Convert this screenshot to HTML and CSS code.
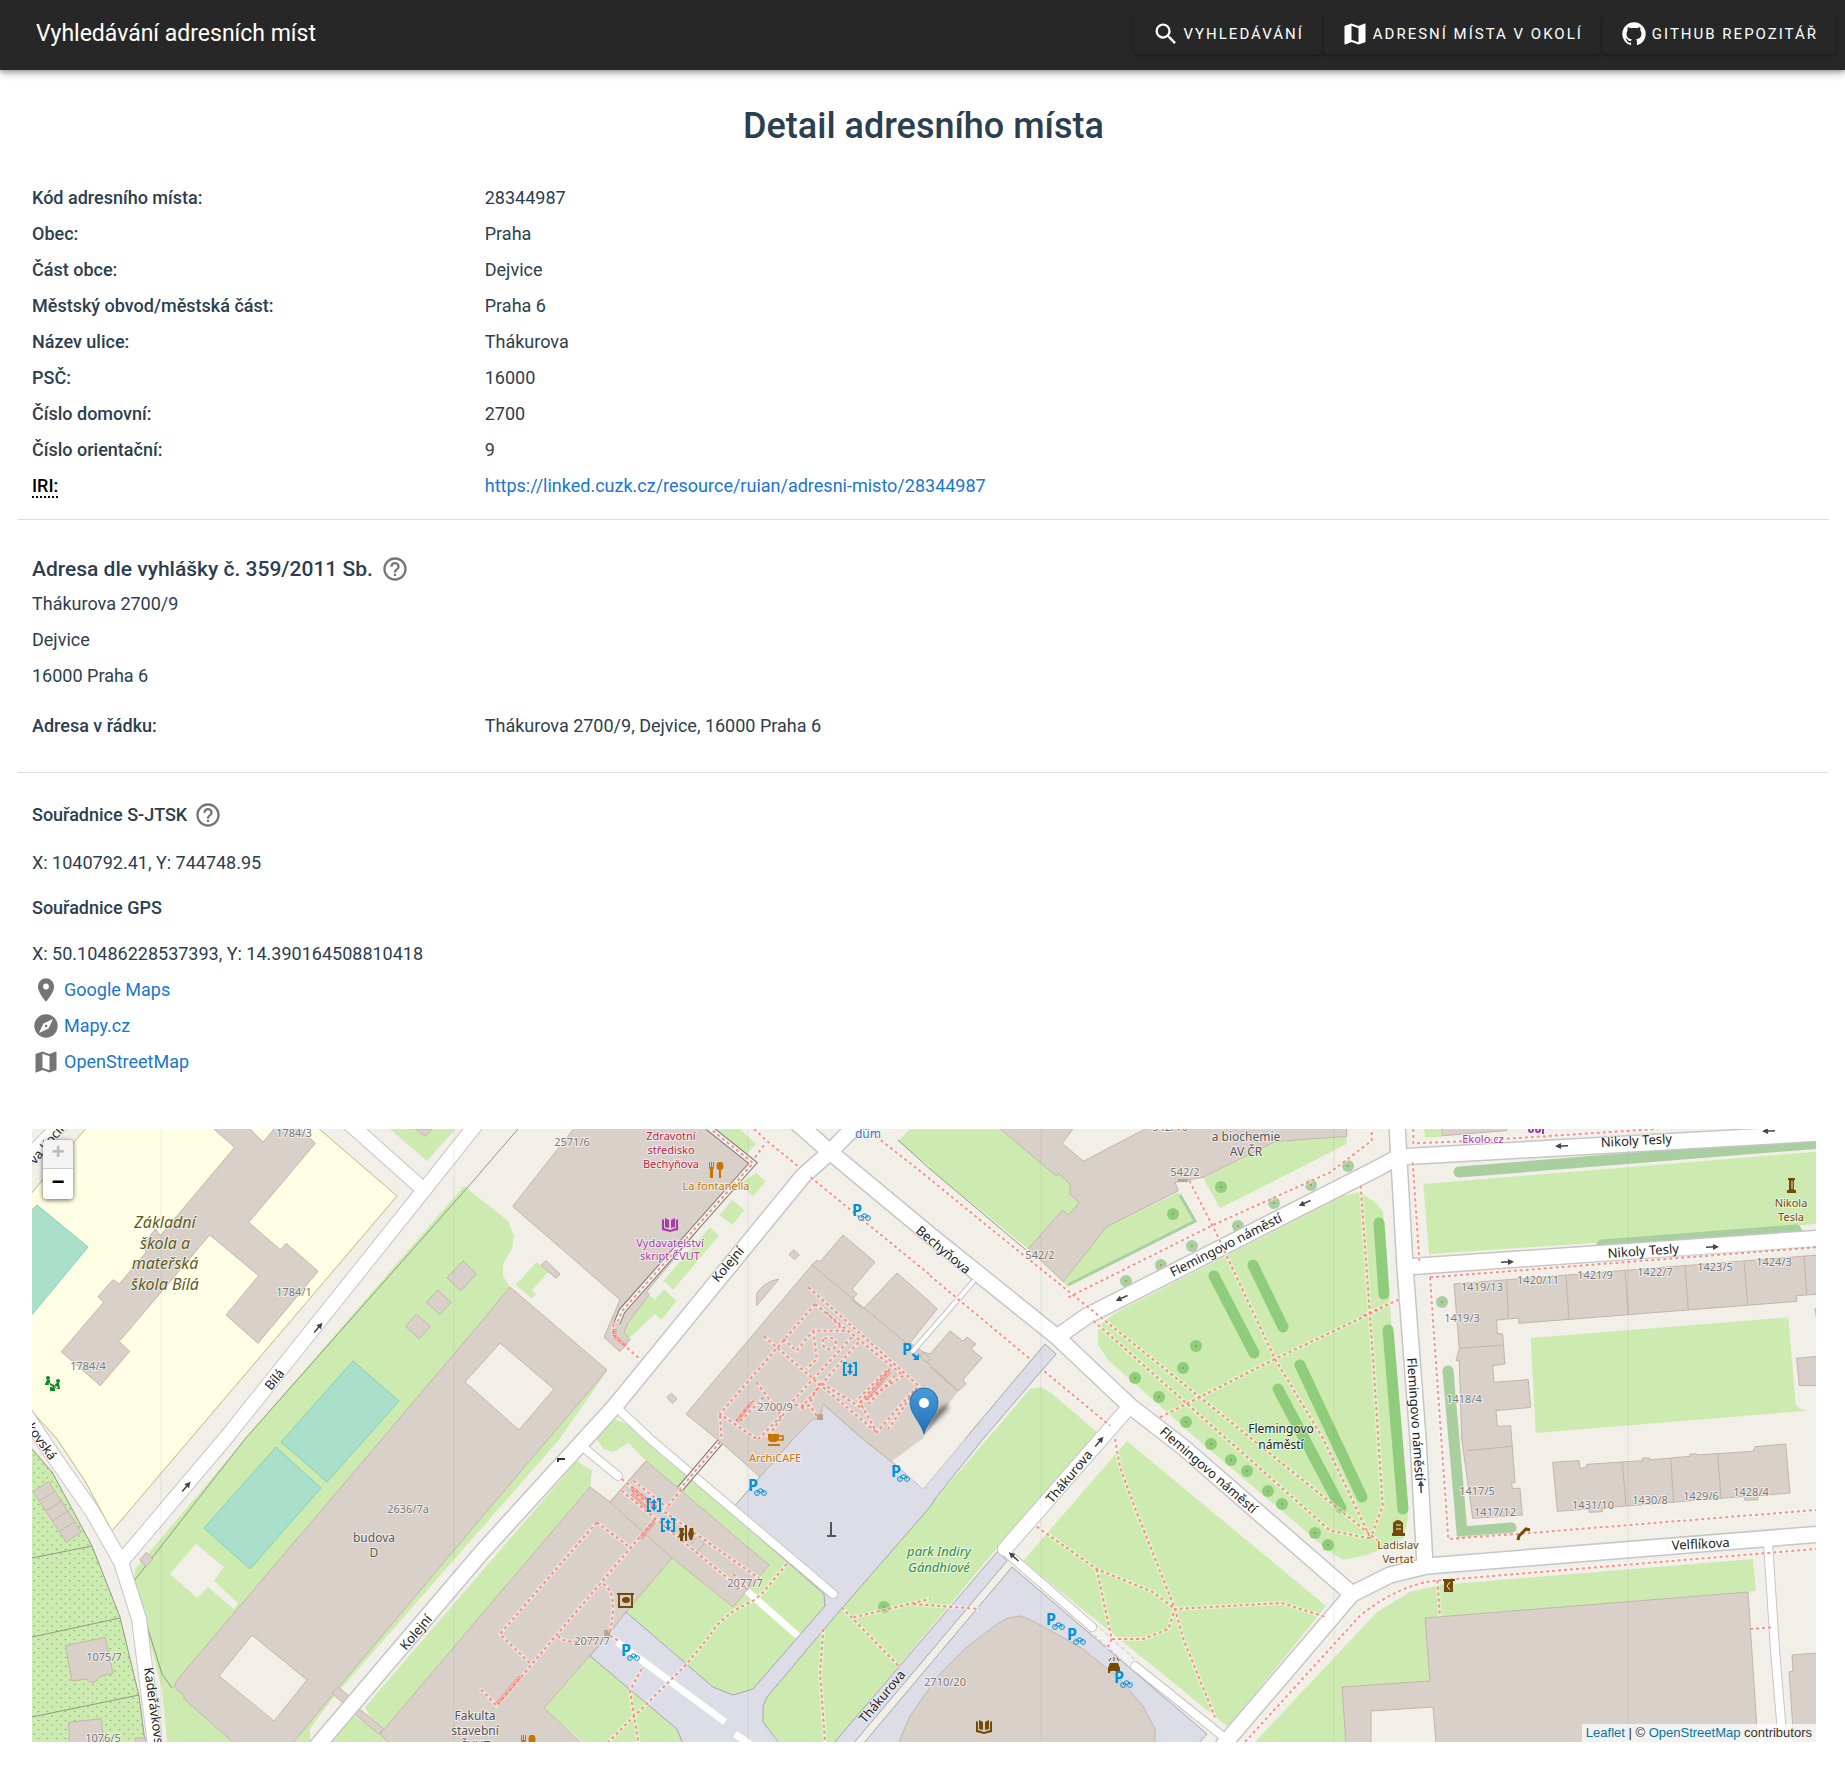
FILE: index.html
```html
<!DOCTYPE html>
<html lang="cs">
<head>
<meta charset="utf-8">
<title>Detail adresního místa</title>
<meta name="viewport" content="width=device-width, initial-scale=1">
<link rel="stylesheet" href="styles.css">
</head>
<body>
<svg class="sprite" aria-hidden="true">
  <symbol id="i-search" viewBox="0 0 24 24"><path d="M9.5,3A6.5,6.5 0 0,1 16,9.5C16,11.11 15.41,12.59 14.44,13.73L14.71,14H15.5L20.5,19L19,20.5L14,15.5V14.71L13.73,14.44C12.59,15.41 11.11,16 9.5,16A6.5,6.5 0 0,1 3,9.5A6.5,6.5 0 0,1 9.5,3M9.5,5C7,5 5,7 5,9.5C5,12 7,14 9.5,14C12,14 14,12 14,9.5C14,7 12,5 9.5,5Z"/></symbol>
  <symbol id="i-map" viewBox="0 0 24 24"><path d="M15,19L9,16.89V5L15,7.11M20.5,3C20.44,3 20.39,3 20.34,3L15,5.1L9,3L3.36,4.9C3.15,4.97 3,5.15 3,5.38V20.5A0.5,0.5 0 0,0 3.5,21C3.55,21 3.61,21 3.66,20.97L9,18.9L15,21L20.64,19.1C20.85,19 21,18.85 21,18.62V3.5A0.5,0.5 0 0,0 20.5,3Z"/></symbol>
  <symbol id="i-github" viewBox="0 0 24 24"><path d="M12,2A10,10 0 0,0 2,12C2,16.42 4.87,20.17 8.84,21.5C9.34,21.58 9.5,21.27 9.5,21C9.5,20.77 9.5,20.14 9.5,19.31C6.73,19.91 6.14,17.97 6.14,17.97C5.68,16.81 5.03,16.5 5.03,16.5C4.12,15.88 5.1,15.9 5.1,15.9C6.1,15.97 6.63,16.93 6.63,16.93C7.5,18.45 8.97,18 9.54,17.76C9.63,17.11 9.89,16.67 10.17,16.42C7.95,16.17 5.62,15.31 5.62,11.5C5.62,10.39 6,9.5 6.65,8.79C6.55,8.54 6.2,7.5 6.75,6.15C6.75,6.15 7.59,5.88 9.5,7.17C10.29,6.95 11.15,6.84 12,6.84C12.85,6.84 13.71,6.95 14.5,7.17C16.41,5.88 17.25,6.15 17.25,6.15C17.8,7.5 17.45,8.54 17.35,8.79C18,9.5 18.38,10.39 18.38,11.5C18.38,15.32 16.04,16.16 13.81,16.41C14.17,16.72 14.5,17.33 14.5,18.26C14.5,19.6 14.5,20.68 14.5,21C14.5,21.27 14.66,21.59 15.17,21.5C19.14,20.16 22,16.42 22,12A10,10 0 0,0 12,2Z"/></symbol>
  <symbol id="i-help" viewBox="0 0 24 24"><path d="M11,18H13V16H11V18M12,2A10,10 0 0,0 2,12A10,10 0 0,0 12,22A10,10 0 0,0 22,12A10,10 0 0,0 12,2M12,20C7.59,20 4,16.41 4,12C4,7.59 7.59,4 12,4C16.41,4 20,7.59 20,12C20,16.41 16.41,20 12,20M12,6A4,4 0 0,0 8,10H10A2,2 0 0,1 12,8A2,2 0 0,1 14,10C14,12 11,11.75 11,15H13C13,12.75 16,12.5 16,10A4,4 0 0,0 12,6Z"/></symbol>
  <symbol id="i-marker" viewBox="0 0 24 24"><path d="M12,11.5A2.5,2.5 0 0,1 9.5,9A2.5,2.5 0 0,1 12,6.5A2.5,2.5 0 0,1 14.5,9A2.5,2.5 0 0,1 12,11.5M12,2A7,7 0 0,0 5,9C5,14.25 12,22 12,22C12,22 19,14.25 19,9A7,7 0 0,0 12,2Z"/></symbol>
  <symbol id="i-compass" viewBox="0 0 24 24"><path d="M14.19,14.19L6,18L9.81,9.81L18,6M12,2A10,10 0 0,0 2,12A10,10 0 0,0 12,22A10,10 0 0,0 22,12A10,10 0 0,0 12,2M12,10.9A1.1,1.1 0 0,0 10.9,12A1.1,1.1 0 0,0 12,13.1A1.1,1.1 0 0,0 13.1,12A1.1,1.1 0 0,0 12,10.9Z"/></symbol>
</svg>

<header class="toolbar">
  <div class="toolbar-title">Vyhledávání adresních míst</div>
  <nav class="toolbar-nav">
    <a class="nav-button" href="#hledani"><svg class="icon"><use href="#i-search"/></svg>Vyhledávání</a>
    <a class="nav-button" href="#okoli"><svg class="icon"><use href="#i-map"/></svg>Adresní místa v okolí</a>
    <a class="nav-button" href="#github"><svg class="icon"><use href="#i-github"/></svg>GitHub repozitář</a>
  </nav>
</header>

<main class="page">
  <h1>Detail adresního místa</h1>

  <dl class="details">
    <dt>Kód adresního místa:</dt><dd>28344987</dd>
    <dt>Obec:</dt><dd>Praha</dd>
    <dt>Část obce:</dt><dd>Dejvice</dd>
    <dt>Městský obvod/městská část:</dt><dd>Praha 6</dd>
    <dt>Název ulice:</dt><dd>Thákurova</dd>
    <dt>PSČ:</dt><dd>16000</dd>
    <dt>Číslo domovní:</dt><dd>2700</dd>
    <dt>Číslo orientační:</dt><dd>9</dd>
    <dt><abbr title="Internationalized Resource Identifier">IRI:</abbr></dt><dd><a href="https://linked.cuzk.cz/resource/ruian/adresni-misto/28344987">https://linked.cuzk.cz/resource/ruian/adresni-misto/28344987</a></dd>
  </dl>

  <hr>

  <section class="address">
    <h2>Adresa dle vyhlášky č. 359/2011 Sb. <svg class="icon icon-muted"><use href="#i-help"/></svg></h2>
    <p>Thákurova 2700/9</p>
    <p>Dejvice</p>
    <p>16000 Praha 6</p>
    <dl class="details details-inline"><dt>Adresa v řádku:</dt><dd>Thákurova 2700/9, Dejvice, 16000 Praha 6</dd></dl>
  </section>

  <hr>

  <section class="coordinates">
    <h3>Souřadnice S-JTSK <svg class="icon icon-muted"><use href="#i-help"/></svg></h3>
    <p class="position">X: 1040792.41, Y: 744748.95</p>
    <h3>Souřadnice GPS</h3>
    <p class="position position-gps">X: 50.10486228537393, Y: 14.390164508810418</p>
    <ul class="map-links">
      <li><svg class="icon icon-muted"><use href="#i-marker"/></svg><a href="#google-maps">Google Maps</a></li>
      <li><svg class="icon icon-muted"><use href="#i-compass"/></svg><a href="#mapy-cz">Mapy.cz</a></li>
      <li><svg class="icon icon-muted"><use href="#i-map"/></svg><a href="#openstreetmap">OpenStreetMap</a></li>
    </ul>
  </section>

  <section class="map" aria-label="Mapa">
    <svg class="map-canvas" viewBox="0 0 1784 613" preserveAspectRatio="xMidYMid slice">
      <defs>
        <pattern id="gardenDots" width="9" height="9" patternUnits="userSpaceOnUse"><circle cx="2" cy="2" r=".8" fill="#7cb66a"/><circle cx="6.5" cy="6.5" r=".8" fill="#7cb66a"/></pattern>
        <linearGradient id="pinFill" x1="0" y1="0" x2="0" y2="1"><stop offset="0" stop-color="#4a9bd8"/><stop offset="1" stop-color="#1f70b8"/></linearGradient>
        <filter id="soft" x="-50%" y="-50%" width="200%" height="200%"><feGaussianBlur stdDeviation="2"/></filter>
        <g id="roadsWide">
          <path d="M285 617L450 423L583 277L771 47L798 23L826 -6"/>
          <path d="M765 -6L798 23L898 106L1025 208L1098 277L1151 318L1320 465L1192 615"/>
          <path d="M1025 208L1055 187L1348 38L1366 28L1790 4"/>
          <path d="M1365 -5L1373 138L1386 310L1393 436"/>
          <path d="M1373 138L1790 109"/>
          <path d="M1320 465L1358 446L1395 437L1790 405"/>
        </g>
        <g id="roadsMid">
          <path d="M89 433L193 310L392 61L446 -7"/>
          <path d="M318 -5L392 61"/>
          <path d="M-5 30L38 -14"/>
          <path d="M-6 286L20 325L60 382L89 433L107 490L123 616"/>
          <path d="M1098 277L973 420"/>
        </g>
        <g id="roadsThin">
          <path d="M583 277L618 310L801 465"/>
          <path d="M546 314L586 347"/>
          <path d="M975 424L1060 498"/>
          <path d="M1103 537L1198 613"/>
          <path d="M1736 414L1743 520L1751 616"/>
        </g>
        <g id="footpaths">
          <g transform="translate(448 0) scale(.333333)">
            <path d="M822 0L860 35L958 115M825 85L858 40M992 145L1350 438M1160 0L1350 150L1500 273L2700 1240"/>
            <path d="M400 585L400 620L480 690"/>
            <path d="M985 475L1315 770L1225 900M1005 525L720 855L830 930M1005 525L1270 740L1140 822M852 622L1000 750L1190 910M910 630L950 665L1000 605L1090 605L1040 550M1000 605L1010 690L980 720M1115 625L935 820L860 930M1135 640L960 840L985 830L1020 760L1150 840M1230 720L1140 820L1190 910L1310 775M1245 740L1165 825M1220 725L1130 815M830 760L905 860L835 930M820 815L765 880M850 805L780 878M720 860L725 930M945 828L990 830L1010 860"/>
            <path d="M1030 630A20 20 0 1 0 1068 650A20 20 0 0 0 1040 628Z"/>
          </g>
          <g transform="translate(448 310) scale(.333333)">
            <path d="M425 120L520 195L840 420M425 155L770 440M460 125L560 205M455 155L520 205M565 200L605 150M525 240L50 800L0 748M350 250L60 585L155 678M350 250L450 325M370 435Q415 460 390 580M235 590Q250 620 350 600M920 375L850 460L820 485Q720 530 690 590L620 675L385 909M485 690L450 755L475 909M1030 570L1020 700L1035 909M1085 505L1255 680M1120 535L1350 480M1300 495L1500 510M760 405L800 450M770 450L800 440M390 590L415 605"/>
          </g>
          <g transform="translate(898 0) scale(.333333)">
            <path d="M0 440L300 690M343 727L540 890M415 505L845 290L1200 130L1325 35L1325 0M778 155L865 325L885 370L1035 690L1180 930L1320 1225M490 575L1200 1205L1320 1228M690 865L1035 690L1350 540M1292 170L1330 700L1358 1130L1322 1228"/>
            <path d="M555 930L570 1015L620 1150L735 1440L760 1530L855 1765M320 1193L500 1320L670 1390L735 1440M500 1320L545 1530L640 1530L715 1500L735 1440L1055 1422L1190 1465M545 1530L530 1560"/>
          </g>
          <g transform="translate(1338 0) scale(.333333)">
            <path d="M128 100L148 395M130 0L130 43L320 35L860 0M180 445L1338 355M180 445L235 1230L440 1215L1338 1143M-375 1839L-30 1460Q90 1365 200 1355L1338 1260M202 1355L210 1465M1140 1500L1205 1495M-20 560L90 510"/>
          </g>
        </g>
        <g id="tree"><circle r="6"/><circle r="1" fill="#b08a3c"/></g>
        <g id="bikeParking"><text class="parking-sign" x="-9" y="4">P</text><g fill="none" stroke="#0092da"><circle cx="0" cy="6" r="2.4"/><circle cx="7" cy="6" r="2.4"/><path d="M0 6L2 2H5L7 6M2 4L4 6L6 3"/></g></g>
        <g id="lift" fill="#0092da"><path d="M-7 -7H-3V-5H-5V5H-3V7H-7ZM7 -7H3V-5H5V5H3V7H7ZM0 -6L3 -2H1V2H3L0 6L-3 2H-1V-2H-3Z"/></g>
        <g id="arrow" fill="none" stroke="#444" stroke-width="1.5"><path d="M-6 0H4"/><path d="M1 -3L7 0L1 3Z" fill="#444" stroke="none"/></g>
        <g id="cutlery"><path d="M-7 -8H-6V-3H-5V-8H-4V-3H-3V-8H-2V-2L-3 0V8H-6V0L-7 -2ZM4 -8A3 4 0 0 1 5 0V8H3V0A3 4 0 0 1 4 -8Z"/></g>
        <g id="book"><path d="M-8 -5L-6 -4V4L0 6L6 4V-4L8 -5V6L0 8L-8 6ZM-5 -6L-1 -4V4L-5 3ZM5 -6L1 -4V4L5 3Z"/></g>
      </defs>

      <rect width="1784" height="613" fill="#f2efe9"/>

      <g class="school">
        <path d="M-2 66L55 -2L285 -2L365 67L80 402L53 352L25 310L-2 280Z"/>
      </g>

      <g class="grass">
        <path d="M432 57L476 92L482 107L480 120L471 135L471 147L478 158L575 242L526 312L307 562L287 587L278 600V613H135L130 560L102 452L103 440L213 310Z"/>
        <path d="M358 0L395 32L423 0Z"/>
        <path d="M545 332L560 342L558 358L348 605L333 578Z"/>
        <path d="M322 587L348 605L358 613H298Z"/>
        <path d="M0 320L20 343L60 417L88 488L107 567L113 613H0Z"/>
        <path d="M998 260L1008 258L1018 263L1065 303L966 418L803 613H748L731 593V577L735 568L805 485Z"/>
        <path d="M1095 312L1294 477L1196 598L991 432Z"/>
        <path d="M1066 202L1071 193L1085 183L1311 67L1328 63L1345 75L1351 83L1359 190L1370 310L1376 390L1371 410L1335 426L1311 431L1298 423L1165 310L1075 230L1066 215Z"/>
        <path d="M1721 430L1408 456L1378 463L1345 483L1223 613H1314L1310 558L1398 552L1393 489L1724 462Z"/>
        <g transform="translate(448 0) scale(.333333)">
          <path d="M710 0H780L828 45L800 75ZM830 132L857 157L820 202L800 185L775 165ZM757 213L793 243L757 288L718 258ZM690 295L716 320L580 482L550 455ZM552 480L590 515L545 572L525 555L445 630L430 610L445 580L505 498L525 510ZM170 398L205 430L155 485L168 495L155 508L107 468ZM1290 0L1255 35L1560 290L1590 300L1720 135L1560 0Z"/>
          <path d="M350 930L355 885L390 868L430 880L500 928L1070 1400L1032 1395L1035 1430L820 1680L760 1698L700 1675L437 1450L575 1287L758 1435L868 1308L500 997L445 942L400 970L370 960Z"/>
          <path d="M330 1580L590 1800L615 1839H310L192 1738Z"/>
        </g>
        <g transform="translate(898 0) scale(.333333)">
          <path d="M0 0H210L378 140L387 135L420 165L420 195L448 220L415 258L397 243L295 360L0 120ZM745 190L795 275L410 472L400 458L530 293ZM820 148L1035 40L1250 22V45L870 238Z"/>
        </g>
        <g transform="translate(1338 0) scale(.333333)">
          <path d="M160 165L1338 68V285L700 340L177 375ZM482 627L1255 565L1277 825L1290 840L1313 845L497 912ZM162 0H215V25L165 25Z"/>
        </g>
      </g>
      <path d="M0 320L20 343L60 417L88 488L107 567L113 613H0Z" fill="url(#gardenDots)"/>
      <path class="fence" d="M0 320L20 343L60 417L88 488L107 567L113 613M0 429L60 417M0 508L88 489M0 588L107 566M450 42L213 310L102 452L116 500L130 545L140 559M448 44L505 -22M898 40L994 121M866 11L898 40"/>

      <g class="pitch">
        <path d="M321 232L367 272L295 353L249 313Z"/>
        <path d="M244 318L289 359L218 440L172 399Z"/>
        <path d="M-2 83L5 76L56 118L-2 188Z"/>
      </g>

      <g class="plaza">
        <path d="M791 275L831 310L865 337L891 360L933 310L1013 215L1024 225L951 310L903 370L898 378L805 485L735 568L731 577V593L748 615H651L645 600L558 527L575 507L594 483L681 558L701 566L721 560L793 477L792 465L698 383L706 373L761 310Z"/>
        <path d="M966 422L975 432L821 615H801Z"/>
        <path d="M980 438L1175 605L1166 615H831Z"/>
      </g>

      <g class="building">
        <path d="M478 158L575 241L450 388L307 558L260 615H203L152 570V566L142 558L145 551L350 310L450 192Z"/>
        <path class="courtyard" d="M468 214L433 253L487 301L522 260ZM220 506L187 547L242 592L275 551Z"/>
        <path d="M614 332L737 436L701 478L640 429L594 483L575 507L512 579L551 615H358L348 605L558 358L578 373Z"/>
        <path d="M780 136L785 131L788 133L811 106L843 133L820 160L825 165L820 171L831 180L865 144L898 173L905 180L878 214L891 223L898 225L918 202L931 212L935 208L944 215L939 220L950 229L931 251L934 255L926 262L890 310L865 337L831 310L791 275L788 290H781L761 310L728 348L691 315L654 285Z"/>
        <path d="M780 136L878 217L926 262M831 180L820 171M898 238L926 262M578 373L640 429M578 373L614 332"/>
        <path class="courtyard" d="M926 262L890 310L860 332L891 360L933 310Z" stroke="none"/>
        <path d="M976 489L988 487L1001 492L1048 518L1085 547L1111 577L1123 600V615H866L878 587L906 547L935 518L965 495Z"/>
        <path d="M1393 489L1716 463L1726 615H1314L1310 558L1398 552Z"/>
        <path class="courtyard" d="M1339 582L1401 578L1404 615H1339Z"/>
        <path d="M1760 526L1786 524V615H1762L1757 543L1761 542Z"/>
        <path d="M306 558L317 567L311 574L300 564ZM325 578L352 600L347 605L322 585Z"/>
        <g transform="scale(.333333)">
          <path d="M540 -5L608 55L385 320L370 300L335 345L342 370L262 465L243 452L198 503L215 520L88 668L205 770L293 667L262 637L533 318L680 440L582 558L678 643L858 427L763 343L745 362L650 280L850 43L800 -5H730L693 40L650 -5Z"/>
          <path d="M1293 396L1333 434L1287 485L1245 447ZM1217 483L1257 520L1224 556L1183 520ZM1153 556L1195 592L1162 629L1120 592ZM1150 0L1180 22L1200 0ZM343 1270L362 1290L343 1313L323 1292Z"/>
          <path d="M3 1088L50 1058L148 1208L103 1240ZM22 1116L68 1086M42 1146L88 1116M62 1176L108 1146M82 1208L128 1178M100 1550L220 1525L243 1633L203 1642Q185 1675 162 1650L120 1656ZM110 1780L208 1769L215 1845H112ZM310 1827H340V1845H310Z"/>
        </g>
        <g transform="translate(448 0) scale(.333333)">
          <path d="M285 -5L98 232L420 512L372 625L420 668L450 632L432 610L445 580L508 497L500 488L820 103L690 -5Z"/>
          <path d="M198 395L240 435L228 448L183 408ZM575 793L591 810L577 823L561 805ZM942 362L958 378L944 392L927 376ZM897 450L830 530V495Q850 458 897 450ZM1330 668L1350 690L1340 700L1320 683Z"/>
          <path d="M655 1220L672 1245L650 1270L628 1250ZM640 1212L628 1225"/>
        </g>
        <g transform="translate(898 0) scale(.333333)">
          <path d="M205 -5L378 140L387 135L420 165L420 195L448 220L415 258L397 243L295 360L400 458L530 293L745 185L735 160L820 145L1035 38L1250 22V-5H655L460 97L397 43L432 -5Z"/>
        </g>
        <g transform="translate(1338 0) scale(.333333)">
          <path d="M215 -5L217 20L410 5V-5ZM252 465L1345 378V495L1280 500V517L447 583L445 567L380 573L382 613L398 615L405 705L368 710L372 760L475 752L482 835L378 845L382 892L422 890L435 1060L425 1062L427 1078L450 1078L457 1158L308 1168L275 928L268 695H258L268 658ZM410 455L415 568M588 438L597 572M765 425L775 555M945 408L955 542M1122 395L1133 528M1302 380L1310 495M268 658L400 648M290 965L425 952"/>
          <path d="M548 1000L627 995L630 1018L650 1015V1006L818 995V987H838V993L960 982V975H980V978L1150 967L1155 953L1247 945L1260 1092L1165 1100L1163 1112L1125 1114L1122 1102L697 1137V1148L657 1150V1140L562 1147ZM757 998L768 1130M902 987L911 1122M1043 975L1053 1107M1280 688L1345 682V770H1288ZM1335 538H1345V600Z"/>
        </g>
      </g>
      <path fill="#f2efe9" d="M164 415L192 438L182 452L206 474L202 480L176 458L165 469L138 445Z"/>
      <g fill="#b6a496"><path d="M785 285H791V291H785ZM572 501H578V507H572ZM1146 50H1156V53H1146Z"/></g>

      <g class="hedge">
        <path class="hedge-thin" d="M1148 66L1163 92L1036 156"/>
        <path d="M1427 43L1790 14M1570 116L1764 101M1416 242L1430 403L1479 399"/>
      </g>
      <g class="hedge hedge-dark">
        <path d="M1182 147L1222 224M1221 136L1251 198M1268 236L1330 368M1246 260L1309 379M1347 94L1352 165M1356 201L1371 380"/>
      </g>
      <g fill="#8fcc7c">
        <use href="#tree" x="1189" y="58"/><use href="#tree" x="1141" y="85"/><use href="#tree" x="1164" y="217"/><use href="#tree" x="1151" y="239"/><use href="#tree" x="1103" y="249"/><use href="#tree" x="1127" y="268"/><use href="#tree" x="1154" y="293"/><use href="#tree" x="1179" y="315"/><use href="#tree" x="1199" y="331"/><use href="#tree" x="1215" y="342"/><use href="#tree" x="1236" y="362"/><use href="#tree" x="1250" y="375"/><use href="#tree" x="1283" y="404"/><use href="#tree" x="1296" y="416"/><use href="#tree" x="852" y="478"/>
      </g>
      <g fill="#a9cfa1">
        <use href="#tree" x="1316" y="37"/><use href="#tree" x="1279" y="56"/><use href="#tree" x="1242" y="74"/><use href="#tree" x="1206" y="97"/><use href="#tree" x="1160" y="117"/><use href="#tree" x="1129" y="136"/><use href="#tree" x="1094" y="152"/><use href="#tree" x="1410" y="173"/>
      </g>

      <path class="tunnel-edge" d="M1060 498L1103 537"/><path class="tunnel" d="M1060 498L1103 537"/>
      <g class="casing"><use href="#roadsThin" stroke-width="10"/><use href="#roadsMid" stroke-width="16"/><use href="#roadsWide" stroke-width="18"/><path d="M941 153L881 222" stroke-width="6"/></g>
      <g class="road"><use href="#roadsThin" stroke-width="8"/><use href="#roadsMid" stroke-width="14"/><use href="#roadsWide" stroke-width="15"/><path d="M941 153L881 222" stroke-width="4"/>
        <path d="M715 462L766 507M585 513L693 593M703 605L725 620" stroke-width="7" stroke-linecap="butt"/></g>

      <path class="arcade-edge" d="M676 -2L721 34L590 182L585 194M688 313L648 360"/>
      <path class="arcade" d="M676 -2L721 34L590 182L585 194M688 313L648 360"/>
      <path class="footpath" d="M676 -2L721 34L590 182L585 194M688 313L648 360"/>
      <use href="#footpaths" class="foot-halo"/>
      <use href="#footpaths" class="footpath"/>
      <path class="stairs" d="M583 200L582 207L594 217M600 359L624 378M622 393L608 410M488 548L465 575M719 274L705 292M857 243L835 270M600 365L615 379"/>

      <g>
        <use href="#arrow" transform="translate(286 199) rotate(-50)"/><use href="#arrow" transform="translate(154 358) rotate(-50)"/><use href="#arrow" transform="translate(1273 74) rotate(156)"/><use href="#arrow" transform="translate(1090 169) rotate(156)"/><use href="#arrow" transform="translate(1530 17) rotate(177)"/><use href="#arrow" transform="translate(1737 2) rotate(177)"/><use href="#arrow" transform="translate(1475 133) rotate(-2)"/><use href="#arrow" transform="translate(1680 118) rotate(-2)"/><use href="#arrow" transform="translate(1389 358) rotate(-92)"/><use href="#arrow" transform="translate(1067 313) rotate(-50)"/><use href="#arrow" transform="translate(982 428) rotate(222)"/>
        <path d="M526 329V333M526 330H533" stroke="#333" stroke-width="2"/>
      </g>

      <g class="house-number">
        <text x="262" y="8">1784/3</text><text x="262" y="167">1784/1</text><text x="56" y="241">1784/4</text><text x="540" y="17">2571/6</text><text x="743" y="282">2700/9</text><text x="376" y="384">2636/7a</text><text x="72" y="532">1075/7</text><text x="71" y="613">1076/5</text><text x="713" y="458">2077/7</text><text x="560" y="516">2077/7</text><text x="913" y="557">2710/20</text><text x="1138" y="2">542/10</text><text x="1153" y="47">542/2</text><text x="1008" y="130">542/2</text><text x="1450" y="162">1419/13</text><text x="1506" y="155">1420/11</text><text x="1563" y="150">1421/9</text><text x="1623" y="147">1422/7</text><text x="1683" y="142">1423/5</text><text x="1742" y="137">1424/3</text><text x="1430" y="193">1419/3</text><text x="1432" y="274">1418/4</text><text x="1445" y="366">1417/5</text><text x="1463" y="387">1417/12</text><text x="1561" y="380">1431/10</text><text x="1618" y="375">1430/8</text><text x="1669" y="371">1429/6</text><text x="1719" y="367">1428/4</text>
      </g>
      <g class="street">
        <text transform="translate(3 36) rotate(-50)">va Kocín</text>
        <text transform="translate(239 262) rotate(-51)">Bílá</text>
        <text transform="translate(686 154) rotate(-50)">Kolejní</text>
        <text transform="translate(374 522) rotate(-50)">Kolejní</text>
        <text transform="translate(883 103) rotate(40)">Bechyňova</text>
        <text transform="translate(1141 148) rotate(-27)">Flemingovo náměstí</text>
        <text transform="translate(1127 304) rotate(41)">Flemingovo náměstí</text>
        <text transform="translate(1375 229) rotate(86)">Flemingovo náměstí</text>
        <text transform="translate(1020 375) rotate(-50)">Thákurova</text>
        <text transform="translate(833 595) rotate(-50)">Thákurova</text>
        <text transform="translate(1569 18) rotate(-3)">Nikoly Tesly</text>
        <text transform="translate(1576 129) rotate(-4)">Nikoly Tesly</text>
        <text transform="translate(1640 421) rotate(-3)">Velflíkova</text>
        <text transform="translate(-6 298) rotate(55)">kovská</text>
        <text transform="translate(112 539) rotate(82)">Kadeřávkovská</text>
      </g>
      <g class="place">
        <text x="342" y="413">budova</text><text x="342" y="428">D</text>
        <text x="443" y="591">Fakulta</text><text x="443" y="606">stavební</text><text x="443" y="621">ČVUT</text>
        <text x="1214" y="12">a biochemie</text><text x="1214" y="27">AV ČR</text>
      </g>
      <g class="place square"><text x="1249" y="304">Flemingovo</text><text x="1249" y="320">náměstí</text></g>
      <g class="school-name"><text x="133" y="99">Základní</text><text x="133" y="120">škola a</text><text x="133" y="140">mateřská</text><text x="133" y="161">škola Bílá</text></g>
      <g class="park-name"><text x="907" y="427">park Indiry</text><text x="907" y="443">Gándhiové</text></g>
      <g class="poi poi-health"><text x="639" y="11">Zdravotní</text><text x="639" y="25">středisko</text><text x="639" y="39">Bechyňova</text></g>
      <g class="poi poi-food"><text x="684" y="61">La fontanella</text><text x="743" y="333">ArchiCAFE</text>
        <use href="#cutlery" x="684" y="41"/><use href="#cutlery" x="496" y="614"/>
        <path d="M736 305H747L747 309Q746 313 743 313H740Q736 313 736 309ZM736 315H748V317H736Z"/><path d="M747 307H751V311H746" fill="none" stroke="#c77400" stroke-width="1.5"/>
      </g>
      <g class="poi poi-shop"><text x="638" y="118">Vydavatelství</text><text x="638" y="131">skript ČVUT</text><text x="1451" y="14">Ekolo.cz</text><use href="#book" x="638" y="95"/><circle cx="1499" cy="1" r="2" fill="none" stroke="#ac39ac" stroke-width="2"/><circle cx="1506" cy="1" r="2" fill="none" stroke="#ac39ac" stroke-width="2"/><path d="M1510 -2H1512V5H1510Z"/></g>
      <g class="poi poi-blue"><text x="836" y="9">dům</text></g>
      <g class="poi poi-historic"><text x="1759" y="78">Nikola</text><text x="1759" y="92">Tesla</text><text x="1366" y="420">Ladislav</text><text x="1366" y="434">Vertat</text>
        <path d="M1756 49H1763V51H1762V61H1764V64H1755V61H1757V51H1756ZM1361 394Q1366 388 1371 394V404H1373V407H1360V404H1361ZM1411 450H1423V452H1421V463H1412V452H1411Z"/>
        <path d="M1364 396H1369M1364 400H1369M1418 453L1415 457L1418 461M1760 52V60" stroke="#f2efe9" fill="none"/>
        <path d="M1486 411L1487 407L1494 400L1498 401" stroke="#734a08" stroke-width="3" fill="none"/>
        <path d="M647 399H652L651 404H653L651 408V412H648V408H646L648 404ZM658 399H661L662 405L660 411H658L656 405ZM653 396H655V412H653ZM585 464H602V466H585Z"/>
        <path d="M587 466V478H600V466" fill="none" stroke="#734a08" stroke-width="2"/><ellipse cx="594" cy="471" rx="4" ry="3"/>
        <use href="#book" x="952" y="597"/>
        <path d="M1076 539L1078 534H1086L1088 539V544H1086V542H1078V544H1076Z"/>
        <path d="M1077 532L1079 529M1087 532L1085 529M1082 532V528" stroke="#734a08"/>
      </g>
      <path d="M799 393V406M795 407H804" stroke="#555" stroke-width="2"/>
      <g fill="#0b8b23"><circle cx="16" cy="249" r="2"/><circle cx="26" cy="252" r="2"/><path d="M13 255L15 251H18V256H13ZM18 258H23V262H18ZM23 255L25 254H27L28 260H24ZM16 255L25 260L26 258L18 254Z"/></g>
      <g fill="#0092da">
        <use href="#bikeParking" x="829" y="83"/><use href="#bikeParking" x="725" y="358"/><use href="#bikeParking" x="868" y="344"/><use href="#bikeParking" x="598" y="523"/><use href="#bikeParking" x="1023" y="492"/><use href="#bikeParking" x="1044" y="507"/><use href="#bikeParking" x="1091" y="550"/>
        <text class="parking-sign" x="870" y="226">P</text><path d="M881 224L885 227L887 225V231H881L883 229L880 226Z"/>
      </g>
      <use href="#lift" x="818" y="240"/><use href="#lift" x="622" y="376"/><use href="#lift" x="636" y="396"/>
      <path class="tile-seam" d="M129 0V613M422 0V613M716 0V613M1009 0V613M1302 0V613M1596 0V613"/>

      <path d="M893 303L909 288Q922 275 914 276Q900 278 893 303Z" fill="#000" opacity=".4" filter="url(#soft)"/>
      <path d="M892 305C889 293 878 285 878 273A14 14 0 0 1 906 273C906 285 895 293 892 305Z" fill="url(#pinFill)" stroke="#2a6da8"/>
      <circle cx="892" cy="274" r="5" fill="#fff"/>
    </svg>
    <div class="zoom-control">
      <button type="button" disabled aria-label="Přiblížit"><span>+</span></button>
      <button type="button" aria-label="Oddálit"><span>−</span></button>
    </div>
    <div class="attribution"><a href="#leaflet">Leaflet</a> | © <a href="#osm">OpenStreetMap</a> contributors</div>
  </section>
</main>
</body>
</html>
```
FILE: styles.css
```css
* { box-sizing: border-box; }

body {
  margin: 0;
  background: #fff;
  color: #2c3e50;
  font-family: Roboto, "Liberation Sans", sans-serif;
  font-size: 18px;
  line-height: 24px;
}

a { color: #1976d2; text-decoration: none; }
h1, h2, h3, p, dl, dd, ul { margin: 0; padding: 0; }

.sprite { display: none; }
.icon { width: 28px; height: 28px; fill: currentColor; flex: none; }
.icon-muted { color: #757575; }

.toolbar {
  display: flex;
  align-items: center;
  justify-content: space-between;
  min-height: 70px;
  padding: 0 9px 2px 36px;
  background: #272727;
  color: #fff;
  box-shadow: 0 2px 4px rgba(0, 0, 0, .25), 0 4px 8px rgba(0, 0, 0, .2);
}
.toolbar-title { font-size: 23px; line-height: 36px; }
.toolbar-nav { display: flex; flex-wrap: wrap; gap: 1px; }
.nav-button {
  display: flex;
  align-items: center;
  gap: 4px;
  height: 40px;
  padding: 0 18px;
  border-radius: 4px;
  color: #fff;
  font-size: 15px;
  letter-spacing: 2px;
  text-transform: uppercase;
  box-shadow: 0 2px 2px rgba(0, 0, 0, .2), 0 1px 4px rgba(0, 0, 0, .15);
}

.page { padding: 24px 16px 25px 18px; }

h1 {
  padding: 8px 0 26px;
  font-size: 36px;
  font-weight: 500;
  line-height: 48px;
  text-align: center;
}

.details {
  display: grid;
  grid-template-columns: 1fr 3fr;
  line-height: 36px;
  padding: 4px 0 15px;
}
.details dt, .details dd { padding: 0 14px; }
.details dt, h3 { font-weight: 500; }
abbr { color: #000; text-decoration: underline dotted 2px; text-underline-offset: 4px; }

hr { height: 1px; margin: 0; border: 0; background: #dedede; }

.address { padding: 32px 14px 28px; line-height: 36px; }
h2 {
  display: flex;
  align-items: center;
  gap: 8px;
  font-size: 21px;
  font-weight: 500;
  line-height: 34px;
}
.details-inline { margin: 0 -14px; padding: 14px 0 0; }

.coordinates { padding: 28px 14px 49px; }
h3 { display: flex; align-items: center; gap: 7px; font-size: 18px; line-height: 28px; }
.position { padding: 22px 0 19px; }
.position-gps { padding: 20px 0 6px; }
.map-links { list-style: none; }
.map-links li { display: flex; align-items: center; gap: 4px; height: 36px; }

.map { position: relative; margin: 0 13px 0 14px; overflow: hidden; }
.map-canvas { display: block; width: 100%; height: 613px; }

.zoom-control {
  position: absolute;
  top: 11px;
  left: 11px;
  display: grid;
  width: 30px;
  border-radius: 4px;
  overflow: hidden;
  box-shadow: 0 1px 5px rgba(0, 0, 0, .65);
}
.zoom-control button {
  height: 30px;
  padding: 0;
  border: 0;
  background: #fff;
  color: #000;
  font: 700 22px/28px "Liberation Mono", monospace;
}
.zoom-control button:disabled { height: 29px; border-bottom: 1px solid #ccc; background: #f4f4f4; color: #bbb; }
.attribution {
  position: absolute;
  right: 0;
  bottom: 0;
  padding: 0 4px;
  background: rgba(255, 255, 255, .7);
  color: #333;
  font: 13px/18px "Liberation Sans", Arial, sans-serif;
}
.attribution a { color: #0078a8; }

.map-canvas path { vector-effect: non-scaling-stroke; }
.map-canvas text { font-family: "Noto Sans", sans-serif; paint-order: stroke; stroke: rgba(255, 255, 255, .6); stroke-width: 2px; }
.school path { fill: #ffffe5; stroke: #b9ba7e; }
.grass { fill: #cdebb0; }
.pitch { fill: #aae0cb; stroke: #80d2b5; }
.plaza { fill: #dddde8; stroke: #a5a5ad; }
.building { fill: #d9d0c9; stroke: #c4b5aa; }
.courtyard { fill: #f2efe9; }
.fence { fill: none; stroke: #8c9c80; }
.hedge { fill: none; stroke: #a9cfa1; stroke-width: 11px; stroke-linecap: round; }
.hedge-thin { stroke-width: 3px; stroke-linecap: butt; }
.hedge-dark { stroke: #8fcc7c; }
.casing, .road { fill: none; stroke-linecap: round; stroke-linejoin: round; }
.casing { stroke: #c6c6c6; }
.road { stroke: #fff; }
.tunnel-edge { stroke: #ccc; stroke-width: 10px; stroke-dasharray: 4 3; }
.tunnel { stroke: #f2f2f2; stroke-width: 8px; }
.arcade-edge { fill: none; stroke: #777; stroke-width: 7px; }
.arcade { fill: none; stroke: #f5f1ee; stroke-width: 5px; }
.foot-halo { fill: none; stroke: rgba(255, 255, 255, .4); stroke-width: 4px; }
.footpath { fill: none; stroke: rgba(250, 128, 114, .85); stroke-width: 2px; stroke-dasharray: 3 3; }
.stairs { fill: none; stroke: #fa8072; stroke-width: 4px; stroke-dasharray: 1 1; }
.tile-seam { stroke: rgba(120, 120, 120, .12); }
.house-number, .place, .school-name, .park-name, .poi { text-anchor: middle; }
.house-number { fill: #777; font-size: 11px; }
.street { fill: #222; font-size: 13px; }
.place { fill: #555; font-size: 12px; }
.square { fill: #222; }
.school-name { fill: #5d5d1d; font-size: 16px; font-style: italic; }
.park-name { fill: #2c8c45; font-size: 13px; font-style: italic; }
.poi { font-size: 11px; }
.poi-health { fill: #c5203e; }
.poi-food { fill: #c77400; }
.poi-shop { fill: #ac39ac; }
.poi-blue { fill: #2d7bdc; font-size: 12px; }
.poi-historic { fill: #734a08; }
.map-canvas .parking-sign { font-size: 16px; font-weight: 700; stroke: none; }
```
